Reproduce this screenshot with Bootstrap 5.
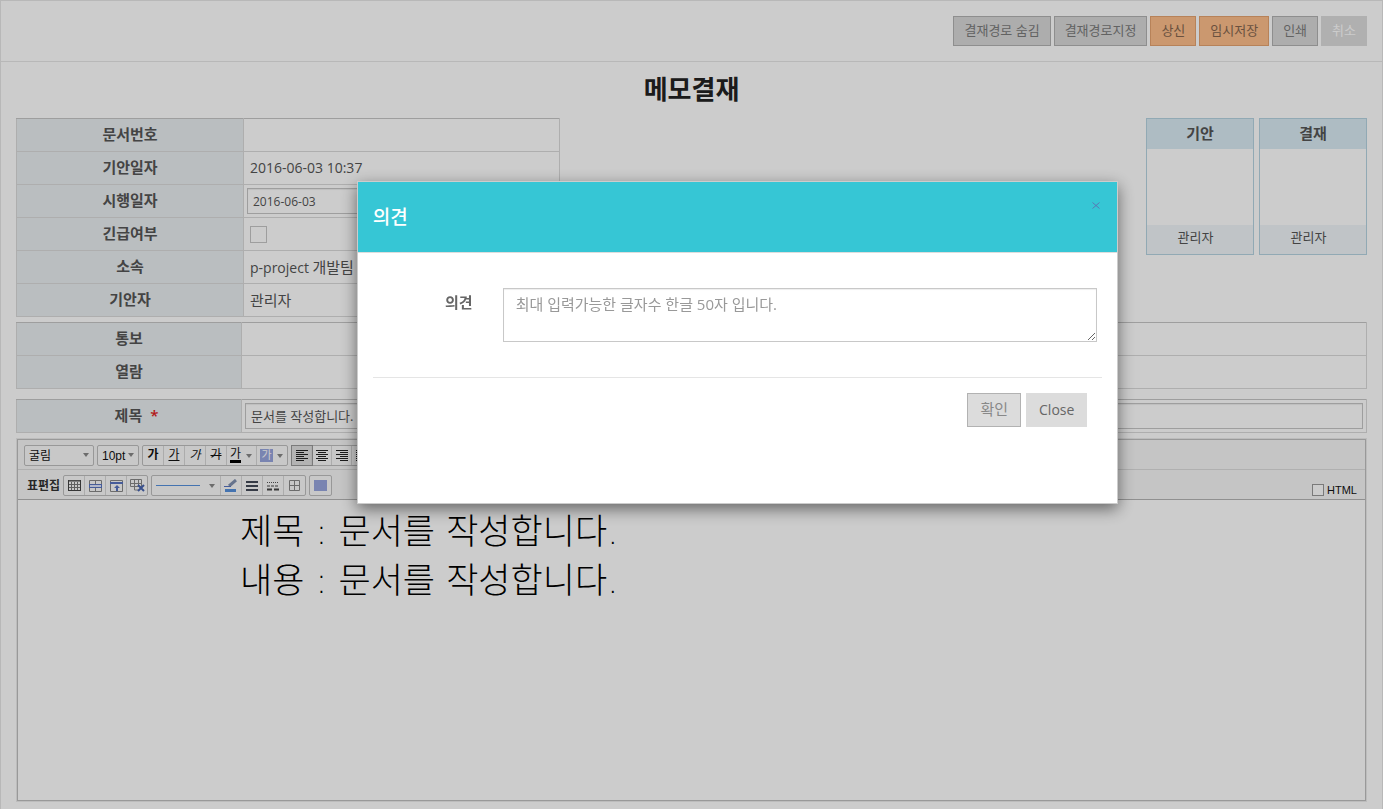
<!DOCTYPE html>
<html lang="ko">
<head>
<meta charset="utf-8">
<meta name="viewport" content="width=device-width, initial-scale=1">
<title>메모결재</title>
<link href="https://cdn.jsdelivr.net/npm/bootstrap@5.3.0/dist/css/bootstrap.min.css" rel="stylesheet">
<style>
  body { font-family: "Open Sans", "Noto Sans CJK KR", sans-serif; font-size: 14px; line-height: 20px; color: #555; background: #fff; }
  .page { border: 1px solid #e7e7e7; border-bottom: 0; }
  .topbar { height: 61px; padding: 0 15px; gap: 3px; border-bottom: 1px solid #e7e7e7; }
  .btn { --bs-btn-border-radius: 0; }
  .btn-tool { --bs-btn-color: #7b7b7b; --bs-btn-bg: #d9d9d9; --bs-btn-border-color: #b2b2b2; --bs-btn-padding-x: 10px; --bs-btn-padding-y: 0; --bs-btn-font-size: 13px; height: 30px; line-height: 24px; padding-bottom: 3px; }
  .btn-tool.accent { --bs-btn-color: #85664f; --bs-btn-bg: #febe8b; --bs-btn-border-color: #e5a370; }
  .btn-tool.cancel { --bs-btn-color: #fff; --bs-btn-bg: #dcdcdc; --bs-btn-border-color: #dcdcdc; }
  .content-area { padding: 0 15px 8px; }
  .doc-title { font-size: 26px; font-weight: 700; line-height: 54px; padding-bottom: 2px; color: #222; margin: 0; }
  .form-grid { border-collapse: collapse; width: 100%; border: 1px solid #dadada; border-top-color: #c6c6c6; border-right-color: #c6c6c6; table-layout: fixed; }
  .form-grid th, .form-grid td { height: 33px; border: 1px solid #dadada; padding: 0; }
  .form-grid tr:first-child > * { border-top-color: #c6c6c6; }
  .form-grid th { background: #e9eef1; text-align: center; font-size: 15px; font-weight: 600; width: 225px; padding-bottom: 2px; }
  .form-grid td { padding-left: 6px; }
  .form-grid td.control { padding: 0 3px; }
  .required { color: #e02020; margin-left: 8px; }
  .with-required { padding-left: 15px; }
  .ko { font-size: 15px; }
  .info { width: 40.3%; }
  .info th { width: 227px; }
  .field { border: 1px solid #c6c6c6; border-radius: 0; height: 26px; padding: 0 5px; font-size: 12px; color: #555; box-shadow: inset 0 1px 1px rgba(0,0,0,.07); }
  .field.subject { font-size: 13px; padding-bottom: 2px; }
  .form-check-input[type=checkbox] { border-radius: 0; border-color: #c6c6c6; margin: 0; float: none; display: block; }
  .urgent { width: 17px; height: 17px; }
  .sign { width: 108px; border: 1px solid #b6d4e2; text-align: center; }
  .sign-head { background: #daebf4; height: 30px; line-height: 29px; font-size: 15px; font-weight: 600; }
  .sign-body { height: 76px; }
  .sign-foot { background: #f1f5f9; height: 29px; line-height: 25px; font-size: 13px; padding-right: 9px; }
  .editor { border: 1px solid #c0c0c0; box-shadow: 0 0 0 1px #ebebeb; margin: 6px 1px 0; font-family: "Liberation Sans", "Noto Sans CJK KR", sans-serif; }
  .bar { background: #f7f7f7; height: 30px; padding: 2px 8px 0 6px; gap: 3px; border-bottom: 1px solid #dcdcdc; }
  .bar + .bar { border-bottom-color: #b4b4b4; }
  .tools { display: flex; height: 21px; border: 1px solid #bebebe; border-radius: 2px; background: #fbfbfb; }
  .tools button { width: 21px; border: 0; border-right: 1px solid #d8d8d8; background: none; padding: 0; color: #111; font-size: 12px; line-height: 19px; display: flex; align-items: center; justify-content: center; }
  .tools button.wide { width: 30px; justify-content: space-between; padding: 0 4px 0 3px; }
  .tools button.line { width: 69px; justify-content: space-between; padding: 0 5px 0 4px; }
  .tools button.on { background: #e0e0e0; box-shadow: 0 0 0 1px #999; }
  .tools button:last-child { border-right: 0; }
  .tools.align button { width: 20px; }
  .tools.cells button:last-child { width: 20px; }
  .pick { width: 70px; height: 21px; border: 1px solid #bebebe; border-radius: 2px; padding: 0 4px; font-size: 12px; line-height: 18px; color: #111; appearance: none; background: #fbfbfb; display: block; }
  .pick-wrap { position: relative; }
  .pick-wrap svg { position: absolute; right: 5px; top: 8px; pointer-events: none; }
  .pick.size { width: 42px; }
  .bar-label { font-size: 12px; font-weight: 700; color: #333; padding-left: 3px; }
  .color-bar { border-bottom: 3px solid #000; line-height: 12px; }
  .color-box { background: #98a5de; color: #fff; line-height: 13px; width: 13px; font-size: 11px; }
  .form-check-input[type=checkbox].html-check { width: 12px; height: 12px; border-color: #999; }
  .html-label { font-size: 11px; color: #111; line-height: 14px; }
  .paper { min-height: 300px; padding: 8px 0 0 222px; font-family: "DejaVu Sans", "Noto Sans CJK KR", sans-serif; font-size: 35px; font-weight: 300; line-height: 49px; color: #000; }
  .paper p { margin: 0; }
  .modal-backdrop { --bs-backdrop-opacity: .2; }
  .modal { padding: 181px 0 0 92px; }
  .modal-dialog { width: 59%; max-width: none; margin: 0 auto; }
  .modal-content { border: 1px solid #ccc; border-radius: 0; box-shadow: 0 5px 15px rgba(0,0,0,.5); color: #666; }
  .modal-header { background: #36c6d5; border-radius: 0; border-bottom: 1px solid #ddd; height: 71px; padding: 0 15px; }
  .modal-title { font-size: 19px; font-weight: 500; color: #fff; line-height: 28px; }
  .dismiss { border: 0; background: none; padding: 0 2px; align-self: flex-start; margin-top: 12px; line-height: 20px; }
  .modal-body { padding: 35px 20px 35px 15px; }
  .opinion-label { width: 130px; padding: 4px 30px 0 0; text-align: right; font-size: 15px; font-weight: 600; }
  .opinion { height: 54px; border: 1px solid #c8c8c8; border-radius: 0; padding: 5px 12px; font-size: 15px; line-height: 20px; box-shadow: inset 0 1px 1px rgba(0,0,0,.07); }
  .opinion::placeholder { color: #999; }
  .modal-footer { margin: 0 15px; padding: 15px 15px 76px; gap: 5px; border-top: 1px solid #e5e5e5; border-radius: 0; }
  .modal-footer > * { margin: 0; }
  .btn-act { --bs-btn-color: #666; --bs-btn-bg: #dcdcdc; --bs-btn-border-color: #dcdcdc; --bs-btn-padding-x: 12px; --bs-btn-padding-y: 0; --bs-btn-font-size: 14px; height: 34px; padding-bottom: 2px; }
  .btn-act.ok { --bs-btn-color: #888; --bs-btn-border-color: #b2b2b2; --bs-btn-font-size: 15px; }
</style>
</head>
<body>
<main class="page min-vh-100">
  <header class="topbar d-flex align-items-center justify-content-end">
    <button type="button" class="btn btn-tool">결재경로 숨김</button>
    <button type="button" class="btn btn-tool">결재경로지정</button>
    <button type="button" class="btn btn-tool accent">상신</button>
    <button type="button" class="btn btn-tool accent">임시저장</button>
    <button type="button" class="btn btn-tool">인쇄</button>
    <button type="button" class="btn btn-tool cancel">취소</button>
  </header>

  <div class="content-area">
    <h1 class="doc-title text-center">메모결재</h1>

    <div class="d-flex justify-content-between align-items-start">
      <div class="info">
        <table class="form-grid">
          <tr><th scope="row">문서번호</th><td></td></tr>
          <tr><th scope="row">기안일자</th><td>2016-06-03 10:37</td></tr>
          <tr><th scope="row"><label for="effective">시행일자</label></th><td class="control"><input id="effective" class="form-control field" type="text" value="2016-06-03"></td></tr>
          <tr><th scope="row"><label for="urgent">긴급여부</label></th><td><input id="urgent" class="form-check-input urgent" type="checkbox"></td></tr>
          <tr><th scope="row">소속</th><td>p-project <span class="ko">개발팀</span></td></tr>
          <tr><th scope="row">기안자</th><td class="ko">관리자</td></tr>
        </table>
      </div>
      <div class="d-flex" style="gap:5px">
        <section class="sign"><div class="sign-head">기안</div><div class="sign-body"></div><div class="sign-foot">관리자</div></section>
        <section class="sign"><div class="sign-head">결재</div><div class="sign-body"></div><div class="sign-foot">관리자</div></section>
      </div>
    </div>

    <table class="form-grid" style="margin-top:5px">
      <tr><th scope="row">통보</th><td></td></tr>
      <tr><th scope="row">열람</th><td></td></tr>
    </table>
    <table class="form-grid" style="margin-top:10px">
      <tr><th scope="row"><label for="subject" class="with-required">제목<span class="required">*</span></label></th><td class="control"><input id="subject" class="form-control field subject" type="text" value="문서를 작성합니다."></td></tr>
    </table>

    <section class="editor">
      <div class="bar d-flex align-items-center">
        <div class="pick-wrap"><select class="pick" aria-label="글꼴"><option>굴림</option></select><svg width="6" height="4"><path d="M0 0h6L3 4z" fill="#888"/></svg></div>
        <div class="pick-wrap"><select class="pick size" aria-label="크기"><option>10pt</option></select><svg width="6" height="4"><path d="M0 0h6L3 4z" fill="#888"/></svg></div>
        <div class="tools">
          <button type="button"><b>가</b></button>
          <button type="button"><u>가</u></button>
          <button type="button"><i>가</i></button>
          <button type="button"><s>가</s></button>
          <button type="button" class="wide"><span class="color-bar">가</span><svg width="6" height="4"><path d="M0 0h6L3 4z" fill="#888"/></svg></button>
          <button type="button" class="wide"><span class="color-box">가</span><svg width="6" height="4"><path d="M0 0h6L3 4z" fill="#888"/></svg></button>
        </div>
        <div class="tools align">
          <button type="button" class="on" aria-label="왼쪽 정렬"><svg width="12" height="12"><path d="M0 .5h12M0 2.5h8M0 4.5h12M0 6.5h8M0 8.5h12M0 10.5h8" stroke="#222"/></svg></button>
          <button type="button" aria-label="가운데 정렬"><svg width="12" height="12"><path d="M0 .5h12M2 2.5h8M0 4.5h12M2 6.5h8M0 8.5h12M2 10.5h8" stroke="#222"/></svg></button>
          <button type="button" aria-label="오른쪽 정렬"><svg width="12" height="12"><path d="M0 .5h12M4 2.5h8M0 4.5h12M4 6.5h8M0 8.5h12M4 10.5h8" stroke="#222"/></svg></button>
          <button type="button" aria-label="양쪽 정렬"><svg width="12" height="12"><path d="M0 .5h12M0 2.5h12M0 4.5h12M0 6.5h12M0 8.5h12M0 10.5h12" stroke="#222"/></svg></button>
        </div>
      </div>
      <div class="bar d-flex align-items-center">
        <span class="bar-label">표편집</span>
        <div class="tools cells">
          <button type="button" aria-label="표 삽입"><svg width="13" height="11"><path d="M.5 .5h12v10H.5zM3.5 2v8M6.5 2v8M9.5 2v8M1 4.5h11M1 7.5h11" fill="none" stroke="#777"/><path d="M0 1h13M.5 0v11M12.5 0v11M0 10.5h13" stroke="#444" fill="none"/></svg></button>
          <button type="button" aria-label="행 삽입"><svg width="13" height="12"><path d="M.5 .5h12v11H.5zM6.500 0v4M6.500 8v4" fill="none" stroke="#888"/><path d="M0 4h13v4H0z" fill="#5874c0"/><path d="M1 6h11" stroke="#dfe5fa" stroke-width="2"/></svg></button>
          <button type="button" aria-label="칸 나누기"><svg width="13" height="12"><path d="M.5 .5h12v11H.5zM0 2.500h13" fill="none" stroke="#888"/><path d="M0 2h13v2H0zM6 11V8H4l3-3 3 3H8v3z" fill="#5874c0"/></svg></button>
          <button type="button" aria-label="표 삭제"><svg width="15" height="13"><path d="M.5 .5h11v7H.5zM4.500 0v8M8.500 0v8M0 4.500h12M4.500 8v3h4" fill="none" stroke="#888"/><path d="M8 6l6 6M14 6l-6 6" stroke="#4865b0" stroke-width="2"/></svg></button>
        </div>
        <div class="tools">
          <button type="button" class="line" aria-label="선 종류"><svg width="44" height="2"><path d="M0 .5h44" stroke="#5590dc"/></svg><svg width="6" height="4"><path d="M0 0h6L3 4z" fill="#888"/></svg></button>
          <button type="button" aria-label="선 색"><svg width="14" height="13"><path d="M1 10h11v3H1z" fill="#5590dc"/><path d="M5 7l7-6" fill="none" stroke="#8090b0" stroke-width="3"/><path d="M0 7.500h7" stroke="#5874c0"/></svg></button>
          <button type="button" aria-label="선 굵기"><svg width="12" height="10"><path d="M0 1h12M0 5h12M0 9h12" stroke="#444a58" stroke-width="2"/></svg></button>
          <button type="button" aria-label="선 모양"><svg width="12" height="10"><path d="M0 1.500h12" stroke="#555" stroke-dasharray="1 1"/><path d="M0 5h12" stroke="#444" stroke-dasharray="3 1"/><path d="M0 8.500h12" stroke="#444" stroke-width="2" stroke-dasharray="5 2"/></svg></button>
          <button type="button" aria-label="테두리"><svg width="11" height="11"><path d="M.5 .5h10v10H.5zM5.500 0v11M0 5.500h11" fill="none" stroke="#888"/></svg></button>
        </div>
        <div class="tools"><button type="button" aria-label="배경색"><svg width="13" height="11"><path d="M0 0h13v11H0z" fill="#98a5de"/></svg></button></div>
        <div class="ms-auto d-flex align-items-center pt-2" style="gap:3px">
          <input type="checkbox" id="html" class="form-check-input html-check"><label for="html" class="html-label">HTML</label>
        </div>
      </div>
      <div class="paper"><p>제목 : 문서를 작성합니다.</p><p>내용 : 문서를 작성합니다.</p></div>
    </section>
  </div>
</main>

<div class="modal-backdrop show"></div>
<div class="modal d-block show" tabindex="-1" role="dialog" aria-labelledby="modalTitle">
  <div class="modal-dialog">
    <div class="modal-content">
      <div class="modal-header">
        <h2 class="modal-title" id="modalTitle">의견</h2>
        <button type="button" class="dismiss" aria-label="닫기"><svg width="8" height="7"><path d="M.5 .5l7 6M7.500 .5l-7 6" stroke="#5a78b4"/></svg></button>
      </div>
      <div class="modal-body d-flex">
        <label class="opinion-label flex-shrink-0" for="opinion">의견</label>
        <textarea id="opinion" class="form-control opinion" placeholder="최대 입력가능한 글자수 한글 50자 입니다."></textarea>
      </div>
      <div class="modal-footer">
        <button type="button" class="btn btn-act ok">확인</button>
        <button type="button" class="btn btn-act">Close</button>
      </div>
    </div>
  </div>
</div>
<script src="https://cdn.jsdelivr.net/npm/bootstrap@5.3.0/dist/js/bootstrap.bundle.min.js"></script>
</body>
</html>
